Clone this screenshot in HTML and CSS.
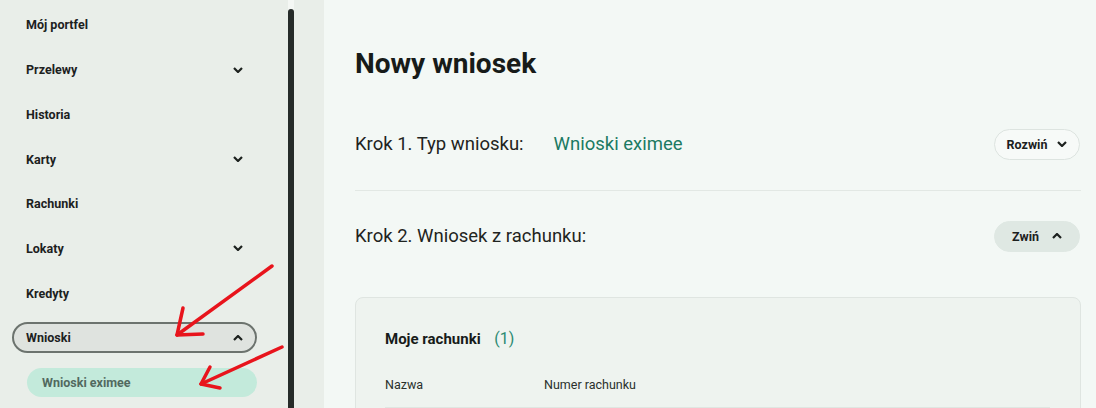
FILE: index.html
```html
<!DOCTYPE html>
<html>
  <head>
    <title>Nowy wniosek</title>
    <meta name="viewport" content="width=device-width, initial-scale=1.0" />
    <link rel="stylesheet" href="styles.css">
  </head>
  <body>
    <div class="layout">
      <aside class="sidebar">
        <ul class="menu">
          <li class="menu-item"><a class="menu-link">Mój portfel</a></li>
          <li class="menu-item">
            <a class="menu-link">Przelewy
              <svg class="chev" viewBox="0 0 10 6"><path d="M1 1l4 4 4-4" /></svg>
            </a>
          </li>
          <li class="menu-item"><a class="menu-link">Historia</a></li>
          <li class="menu-item">
            <a class="menu-link">Karty
              <svg class="chev" viewBox="0 0 10 6"><path d="M1 1l4 4 4-4" /></svg>
            </a>
          </li>
          <li class="menu-item"><a class="menu-link">Rachunki</a></li>
          <li class="menu-item">
            <a class="menu-link">Lokaty
              <svg class="chev" viewBox="0 0 10 6"><path d="M1 1l4 4 4-4" /></svg>
            </a>
          </li>
          <li class="menu-item"><a class="menu-link">Kredyty</a></li>
          <li class="menu-item">
            <a class="menu-link open">Wnioski
              <svg class="chev" viewBox="0 0 10 6"><path d="M1 5l4-4 4 4" /></svg>
            </a>
          </li>
          <li class="menu-item"><a class="submenu-link active">Wnioski eximee</a></li>
        </ul>
        <div class="scroll-track"><div class="scroll-thumb"></div></div>
      </aside>

      <main class="content">
        <h1 class="page-title">Nowy wniosek</h1>

        <section class="step">
          <div class="step-row">
            <span class="step-label">Krok 1. Typ wniosku:</span>
            <span class="step-value">Wnioski eximee</span>
            <button class="toggle">Rozwiń
              <svg class="chev" viewBox="0 0 10 6"><path d="M1 1l4 4 4-4" /></svg>
            </button>
          </div>
        </section>

        <section class="step step-open">
          <div class="step-row">
            <span class="step-label">Krok 2. Wniosek z rachunku:</span>
            <button class="toggle toggle-active">Zwiń
              <svg class="chev" viewBox="0 0 10 6"><path d="M1 5l4-4 4 4" /></svg>
            </button>
          </div>
        </section>

        <div class="accounts">
          <h2 class="accounts-title">Moje rachunki <span class="count">(1)</span></h2>
          <div class="accounts-head">
            <span class="col-name">Nazwa</span>
            <span class="col-number">Numer rachunku</span>
          </div>
          <div class="accounts-row"></div>
        </div>
      </main>
    </div>

    <!-- red hand-drawn markers -->
    <svg class="marks" viewBox="0 0 1096 408" width="1096" height="408">
      <g fill="none" stroke="#e8141c" stroke-width="3.5" stroke-linecap="round" stroke-linejoin="round">
        <path d="M272 266L177 335" />
        <path d="M183 308L177 335L203 334" />
        <path d="M282 347L201 384" />
        <path d="M210 367L201 384L220 388" />
      </g>
    </svg>
  </body>
</html>
```

FILE: styles.css
```css
* {
  box-sizing: border-box;
}
html,
body {
  margin: 0;
  height: 100%;
  overflow: hidden;
}
body {
  font-family: Roboto, "Noto Sans", Arial, sans-serif;
  color: #1c211e;
  background: #f3f8f5;
}
.layout {
  display: flex;
  height: 100%;
}

/* sidebar */
.sidebar {
  width: 324px;
  flex-shrink: 0;
  display: flex;
  background: #e9eee9;
}
.menu {
  list-style: none;
  margin: 0;
  padding: 2.6px 0 0;
  width: 288px;
}
.menu-item {
  height: 44.7px;
  display: flex;
  align-items: center;
}
.menu-link {
  display: flex;
  align-items: center;
  justify-content: space-between;
  margin-left: 12px;
  width: 245px;
  height: 31px;
  padding: 0 12px;
  border: 2px solid transparent;
  border-radius: 16px;
  font-size: 12.5px;
  font-weight: 700;
  color: #1c211e;
}
.menu-link.open {
  background: #dfe3df;
  border-color: #6c736e;
}
.submenu-link {
  display: flex;
  align-items: center;
  margin-left: 27px;
  width: 230px;
  height: 29px;
  padding: 0 15px;
  border-radius: 15px;
  font-size: 12.5px;
  font-weight: 700;
  color: #52695f;
}
.submenu-link.active {
  background: #c3eadb;
}
.chev {
  width: 10px;
  height: 6px;
  fill: none;
  stroke: #1c211e;
  stroke-width: 2.2;
}
.scroll-track {
  width: 6px;
  background: #f4f7f4;
}
.scroll-thumb {
  margin-top: 9px;
  height: calc(100% - 9px);
  background: #262b29;
  border-radius: 3px 3px 0 0;
}

/* main column */
.content {
  flex: 1;
  padding: 46px 15px 0 31px;
}
.page-title {
  margin: 0;
  font-size: 28px;
  line-height: 36px;
  font-weight: 700;
  color: #171b19;
}
.step {
  padding-bottom: 30px;
  border-bottom: 1px solid #e2e8e4;
}
.step:first-of-type {
  margin-top: 46.5px;
}
.step-open {
  padding-top: 30px;
  border-bottom: 0;
  padding-bottom: 45px;
}
.step-row {
  display: flex;
  align-items: center;
  height: 31px;
}
.step-label {
  font-size: 18.5px;
  color: #1f2421;
}
.step-value {
  margin-left: 30px;
  font-size: 18.5px;
  color: #1b7a62;
}
.toggle {
  margin-left: auto;
  margin-right: 1px;
  width: 86px;
  height: 31px;
  display: flex;
  align-items: center;
  justify-content: center;
  gap: 10px;
  border: 1px solid #dde4e0;
  border-radius: 16px;
  background: #f7faf8;
  font-family: inherit;
  font-size: 12.5px;
  font-weight: 700;
  color: #1c211e;
}
.toggle-active {
  background: #dfe8e3;
  border-color: #dfe8e3;
  gap: 13px;
}

/* accounts card */
.accounts {
  background: #eef3ef;
  border: 1px solid #dfe5e1;
  border-radius: 8px;
  padding: 30px 30px 0 29px;
}
.accounts-title {
  margin: 0;
  font-size: 15px;
  line-height: 22px;
  font-weight: 700;
  color: #171b19;
}
.count {
  margin-left: 10px;
  font-weight: 400;
  font-size: 16px;
  color: #2b8a72;
}
.accounts-head {
  display: flex;
  margin-top: 27px;
  font-size: 12.5px;
  line-height: 16px;
  color: #2a302c;
}
.col-name {
  width: 159px;
}
.accounts-row {
  margin-top: 14px;
  height: 40px;
  background: #dfe6e1;
}

.marks {
  position: absolute;
  left: 0;
  top: 0;
  pointer-events: none;
}
```
